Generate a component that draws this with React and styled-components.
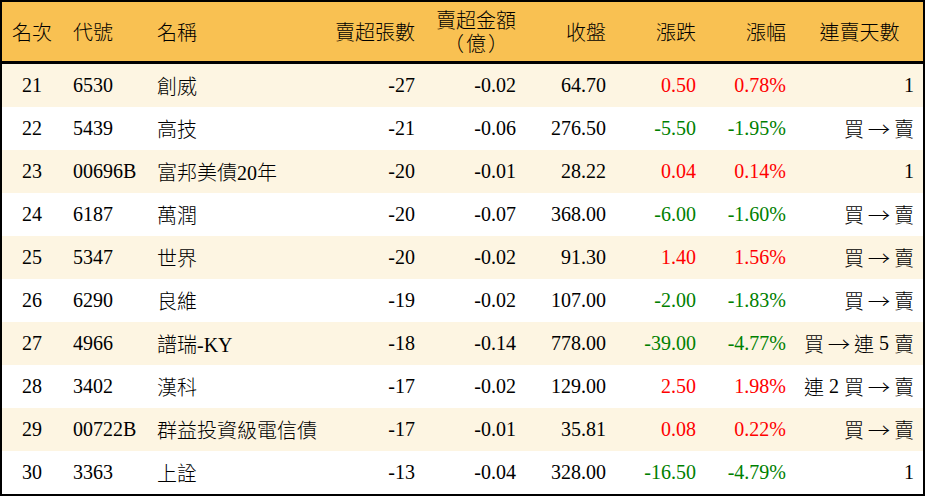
import React from "react";
import styled, { createGlobalStyle } from "styled-components";

const Global = createGlobalStyle`
  html, body { margin: 0; padding: 0; background: #ffffff; }
  body { font-family: "Liberation Serif", "Noto Sans CJK TC", serif; }
`;

const COLS = "60px 85px 183px 95px 101px 90px 90px 90px 127px";

const Table = styled.div`
  width: 921px;
  border: 2px solid #000;
  background: #fff;
  font-family: "Liberation Serif", "Noto Sans CJK TC", serif;
  font-size: 20px;
  font-weight: 300;
  color: #000;
`;

const HeadRow = styled.div`
  display: grid;
  grid-template-columns: ${COLS};
  height: 59px;
  background: #f9c152;
  border-bottom: 3px solid #000;
`;

const Row = styled.div`
  display: grid;
  grid-template-columns: ${COLS};
  height: 43px;
  background: ${(p) => (p.$striped ? "#fdf5e2" : "#ffffff")};
`;

const justifyMap = { left: "flex-start", center: "center", right: "flex-end" };

const Cell = styled.div`
  display: flex;
  align-items: center;
  justify-content: ${(p) => justifyMap[p.$align || "right"]};
  padding: ${(p) =>
    p.$align === "left" ? "0 0 0 11px" : p.$align === "center" ? "0" : "0 10px 0 0"};
  white-space: nowrap;
  color: ${(p) => (p.$tone === "up" ? "#ff0000" : p.$tone === "down" ? "#008000" : "#000")};
`;

const NameCell = styled(Cell)`
  padding-left: 10px;
`;

const LastCell = styled(Cell)`
  padding-right: 9px;
`;

const HeadStack = styled.div`
  display: flex;
  flex-direction: column;
  align-items: center;
  line-height: 23px;
  margin-top: 3px;
`;

const Paren = styled.span`
  letter-spacing: 2px;
  margin-right: -2px;
`;

const Streak = styled.span`
  display: inline-flex;
  align-items: center;
  gap: 5px;
`;

const Arrow = styled.span`
  font-family: "Noto Sans CJK TC", sans-serif;
  font-weight: 300;
  display: inline-block;
  width: 20px;
  text-align: center;
  transform: scaleX(1.12);
`;

const rows = [
  [21, "6530", "創威", -27, "-0.02", "64.70", "0.50", "0.78%", "1"],
  [22, "5439", "高技", -21, "-0.06", "276.50", "-5.50", "-1.95%", "買 → 賣"],
  [23, "00696B", "富邦美債20年", -20, "-0.01", "28.22", "0.04", "0.14%", "1"],
  [24, "6187", "萬潤", -20, "-0.07", "368.00", "-6.00", "-1.60%", "買 → 賣"],
  [25, "5347", "世界", -20, "-0.02", "91.30", "1.40", "1.56%", "買 → 賣"],
  [26, "6290", "良維", -19, "-0.02", "107.00", "-2.00", "-1.83%", "買 → 賣"],
  [27, "4966", "譜瑞-KY", -18, "-0.14", "778.00", "-39.00", "-4.77%", "買 → 連 5 賣"],
  [28, "3402", "漢科", -17, "-0.02", "129.00", "2.50", "1.98%", "連 2 買 → 賣"],
  [29, "00722B", "群益投資級電信債", -17, "-0.01", "35.81", "0.08", "0.22%", "買 → 賣"],
  [30, "3363", "上詮", -13, "-0.04", "328.00", "-16.50", "-4.79%", "1"],
];

function renderStreak(text) {
  if (!text.includes(" ")) return text;
  return (
    <Streak>
      {text.split(" ").map((tok, i) =>
        tok === "→" ? <Arrow key={i}>→</Arrow> : <span key={i}>{tok}</span>
      )}
    </Streak>
  );
}

export default function App() {
  return (
    <>
      <Global />
      <Table>
        <HeadRow>
          <Cell $align="center">名次</Cell>
          <Cell $align="left">代號</Cell>
          <NameCell $align="left">名稱</NameCell>
          <Cell>賣超張數</Cell>
          <Cell>
            <HeadStack>
              <span>賣超金額</span>
              <Paren>（億）</Paren>
            </HeadStack>
          </Cell>
          <Cell>收盤</Cell>
          <Cell>漲跌</Cell>
          <Cell>漲幅</Cell>
          <Cell $align="center">連賣天數</Cell>
        </HeadRow>
        {rows.map((r, i) => {
          const tone = r[6].startsWith("-") ? "down" : "up";
          return (
            <Row key={r[0]} $striped={i % 2 === 0}>
              <Cell $align="center">{r[0]}</Cell>
              <Cell $align="left">{r[1]}</Cell>
              <NameCell $align="left">{r[2]}</NameCell>
              <Cell>{r[3]}</Cell>
              <Cell>{r[4]}</Cell>
              <Cell>{r[5]}</Cell>
              <Cell $tone={tone}>{r[6]}</Cell>
              <Cell $tone={tone}>{r[7]}</Cell>
              <LastCell>{renderStreak(r[8])}</LastCell>
            </Row>
          );
        })}
      </Table>
    </>
  );
}
